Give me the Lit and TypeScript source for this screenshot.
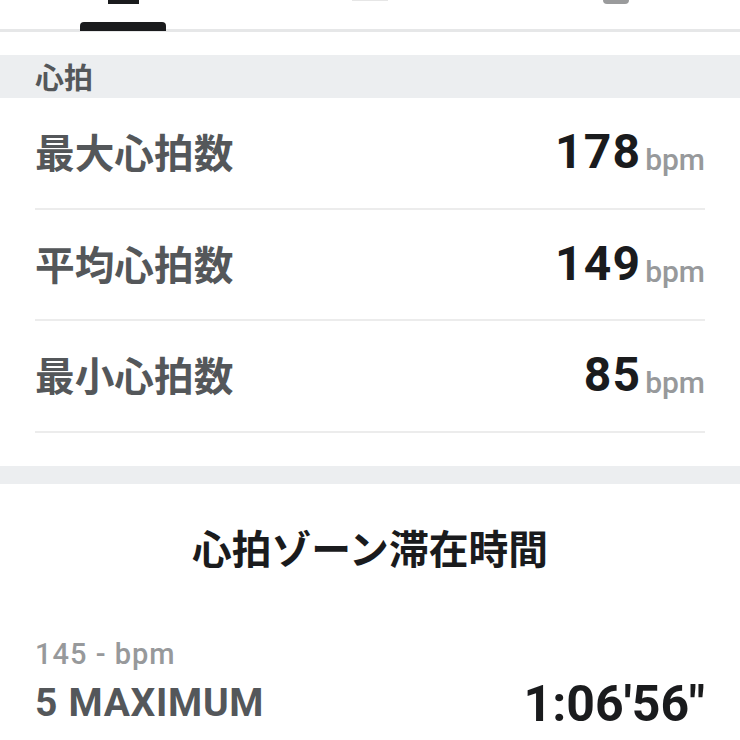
import {html, css, LitElement} from 'lit';
import {customElement} from 'lit/decorators.js';

const stats = [
  {label: '最大心拍数', value: '178'},
  {label: '平均心拍数', value: '149'},
  {label: '最小心拍数', value: '85'},
];

@customElement('app-root')
export class AppRoot extends LitElement {
  static styles = css`
    :host {
      display: block;
      height: 740px;
      overflow: hidden;
      background: #fff;
      font-family: Roboto, 'Noto Sans CJK JP', sans-serif;
    }

    .tabs {
      height: 29px;
      display: grid;
      grid-template-columns: repeat(3, 1fr);
      border-bottom: 3px solid #e6e7e8;
    }

    .tab {
      position: relative;
    }

    .tab-mark {
      position: absolute;
      top: 0;
    }

    .tab-mark.one {
      left: 108px;
      width: 31px;
      height: 4px;
      background: #1a1b1d;
    }

    .tab-mark.two {
      left: 105px;
      width: 36px;
      height: 1px;
      background: #e6e6e6;
    }

    .tab-mark.three {
      left: 110px;
      width: 26px;
      height: 4px;
      background: #9a9b9c;
      border-radius: 0 0 13px 13px;
    }

    .tab-bar {
      position: absolute;
      left: 80px;
      top: 22px;
      width: 86px;
      height: 9px;
      background: #1a1b1d;
      border-radius: 4px 4px 0 0;
    }

    .section {
      margin-top: 23px;
      height: 40px;
      padding: 3px 0 0 35px;
      background: #eceef0;
      color: #54575a;
      font-size: 29px;
      font-weight: 700;
      line-height: 43px;
    }

    .rows {
      padding: 0 35px;
    }

    .row {
      height: 109.5px;
      display: flex;
      align-items: center;
      justify-content: space-between;
      border-bottom: 2px solid #ececec;
    }

    .label {
      margin-top: -4px;
      color: #54575a;
      font-size: 39.7px;
      font-weight: 700;
    }

    .value {
      margin-top: -2px;
      color: #1a1b1d;
      font-size: 48px;
      font-weight: 700;
      letter-spacing: 1.2px;
    }

    .unit {
      margin-left: 4px;
      vertical-align: -2px;
      color: #97999b;
      font-size: 30px;
      font-weight: 500;
      letter-spacing: 0;
    }

    .spacer {
      margin-top: 33px;
      height: 18px;
      background: #eceef0;
    }

    .title {
      margin-top: 42px;
      text-align: center;
      color: #1a1b1d;
      font-size: 39.8px;
      font-weight: 700;
      line-height: 50px;
    }

    .zone {
      margin-top: 59px;
      padding: 0 35px;
      display: flex;
      justify-content: space-between;
      align-items: flex-end;
    }

    .range {
      color: #97999b;
      font-size: 29px;
      font-weight: 500;
      letter-spacing: 1px;
      line-height: 38px;
    }

    .zone-name {
      margin-top: 7px;
      color: #54575a;
      font-size: 39px;
      font-weight: 700;
      letter-spacing: 0.7px;
      line-height: 46px;
    }

    .time {
      margin-bottom: -2px;
      color: #1a1b1d;
      font-size: 50px;
      font-weight: 700;
      line-height: 48px;
    }
  `;

  render() {
    return html`
      <div class="tabs">
        <div class="tab">
          <div class="tab-mark one"></div>
          <div class="tab-bar"></div>
        </div>
        <div class="tab"><div class="tab-mark two"></div></div>
        <div class="tab"><div class="tab-mark three"></div></div>
      </div>
      <div class="section">心拍</div>
      <div class="rows">
        ${stats.map(s => html`
          <div class="row">
            <span class="label">${s.label}</span>
            <span class="value">${s.value}<span class="unit">bpm</span></span>
          </div>
        `)}
      </div>
      <div class="spacer"></div>
      <div class="title">心拍ゾーン滞在時間</div>
      <div class="zone">
        <div>
          <div class="range">145 - bpm</div>
          <div class="zone-name">5 MAXIMUM</div>
        </div>
        <div class="time">1:06'56"</div>
      </div>
    `;
  }
}
